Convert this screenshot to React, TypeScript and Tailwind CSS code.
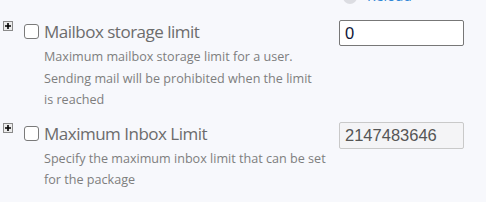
export default function App() {
  const rows = [
    {
      title: "Mailbox storage limit",
      lines: [
        "Maximum mailbox storage limit for a user.",
        "Sending mail will be prohibited when the limit",
        "is reached",
      ],
      value: "0",
      disabled: false,
    },
    {
      title: "Maximum Inbox Limit",
      lines: ["Specify the maximum inbox limit that can be set", "for the package"],
      value: "2147483646",
      disabled: true,
    },
  ];

  return (
    <div className="min-h-screen bg-[#f7f8fc] font-['Open_Sans',sans-serif] overflow-hidden">
      {/* cut-off toolbar above */}
      <div className="h-[4px] overflow-hidden flex items-end pl-[343px] gap-[10px]">
        <span className="w-[14px] h-[14px] rounded-full bg-[#dcdde2]" />
        <span className="text-[14px] leading-[16px] text-[#2f86d6]">Reload</span>
      </div>

      <div className="pt-[16px] flex flex-col gap-[11px]">
        {rows.map((r) => (
          <div key={r.title} className="flex items-start">
            <div className="w-[24px] pl-[3px] pt-[1px]">
              <div className="w-[10px] h-[10px] border border-[#8a8a8a] bg-[#ececec] flex items-center justify-center">
                <svg width="8" height="8" viewBox="0 0 8 8">
                  <path d="M4 1v6M1 4h6" stroke="#000" strokeWidth="1.6" />
                </svg>
              </div>
            </div>
            <div className="w-[20px] pt-[4px]">
              <div className="w-[15px] h-[15px] rounded-[3px] border border-[#7a7a7a] bg-white" />
            </div>
            <div className="flex-1">
              <div className="text-[17px] leading-[24px] tracking-[-0.5px] text-[#6c6c6c]">{r.title}</div>
              <div className="mt-[2px] text-[12.6px] leading-[21.5px] text-[#7e7e7e] whitespace-nowrap">
                {r.lines.map((l) => (
                  <div key={l}>{l}</div>
                ))}
              </div>
            </div>
            <div className="mr-[22px]">
              <input
                readOnly
                value={r.value}
                disabled={r.disabled}
                className={
                  r.disabled
                    ? "w-[125px] h-[27px] rounded-[2px] border border-[#c9c9c9] bg-[#f4f4f6] px-[5px] font-['Liberation_Sans',sans-serif] text-[16.5px] text-[#555]"
                    : "w-[125px] h-[26px] rounded-[2px] border border-[#777] bg-white px-[5px] font-['Liberation_Sans',sans-serif] text-[16.5px] text-[#10183a] outline-none"
                }
              />
            </div>
          </div>
        ))}
      </div>
    </div>
  );
}
